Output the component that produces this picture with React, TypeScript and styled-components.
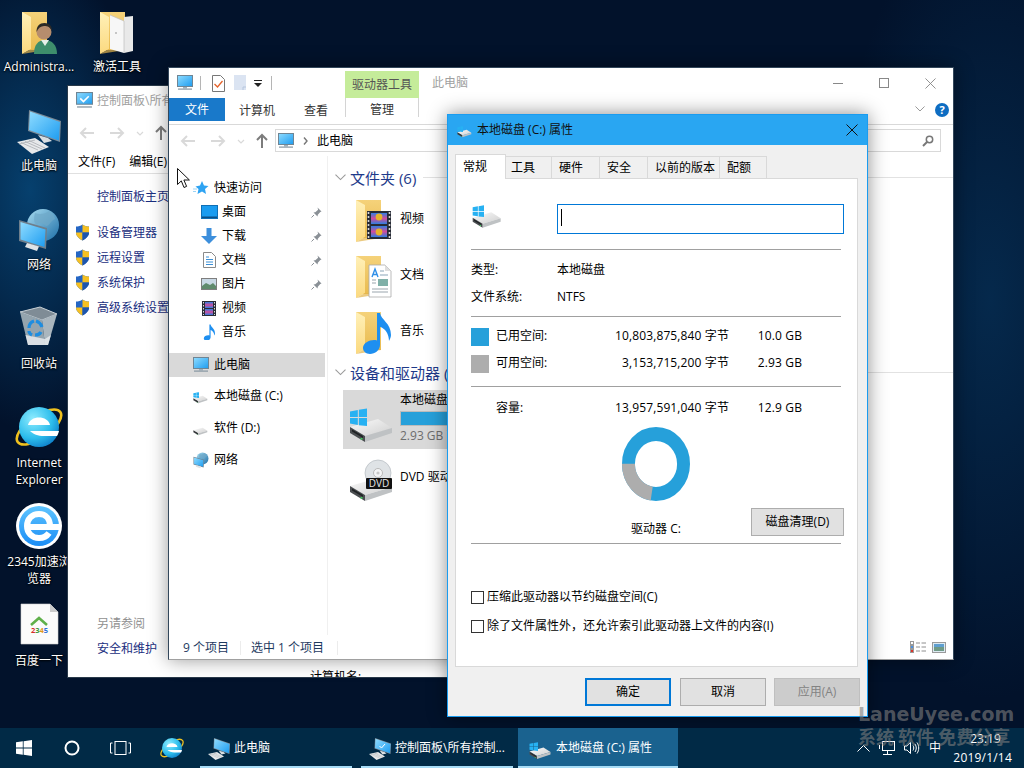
import React from "react";
import styled, { createGlobalStyle } from "styled-components";

const Global = createGlobalStyle`
  html, body { margin: 0; padding: 0; width: 1024px; height: 768px; overflow: hidden; }
  body { font-family: "Open Sans", "Noto Sans CJK SC", sans-serif; font-size: 12px; line-height: 16px; color: #000; }
`;

const Screen = styled.div`
  position: relative; width: 1024px; height: 768px; overflow: hidden;
  background:
    radial-gradient(ellipse 120px 240px at 30px 190px, #06406e 0%, rgba(6,64,110,0) 100%),
    radial-gradient(ellipse 160px 400px at 990px 300px, #05294c 0%, rgba(5,41,76,0) 100%),
    #02122b;
`;
const DefsSvg = styled.svg`position: absolute; width: 0; height: 0;`;

/* desktop */
const DesktopGrid = styled.div`
  display: grid; grid-auto-flow: column; grid-template-rows: repeat(7, 99px); grid-template-columns: repeat(2, 78px);
  padding-top: 4px; height: 723px; box-sizing: border-box;
`;
const DesktopIcon = styled.div`
  display: flex; flex-direction: column; align-items: center; padding-top: 3px; box-sizing: border-box; width: 78px;
  svg { display: block; margin-bottom: 3px; flex: none; }
`;
const DesktopLabel = styled.div`
  width: 75px; text-align: center; color: #fff; line-height: 17px; word-break: break-all;
  text-shadow: 0 1px 2px #000, 0 0 2px #000;
  &[data-latin] { word-break: normal; }
`;

/* windows */
const Win = styled.div<{ $x: number; $y: number; $w: number; $h: number }>`
  position: absolute; left: ${p => p.$x}px; top: ${p => p.$y}px; width: ${p => p.$w}px; height: ${p => p.$h}px;
  box-sizing: border-box; display: flex; flex-direction: column; overflow: hidden;
`;
const ControlWin = styled(Win)`background: #fff; border: 1px solid #2a3a4a;`;
const ExplorerWin = styled(Win)`background: #fff; border: 1px solid #33475b; box-shadow: 0 0 18px rgba(0,0,0,.4); border-bottom-color:#a0a0a0;`;
const DialogWin = styled(Win)`background: #f0f0f0; border: 1px solid #1a9cf0; box-shadow: 0 0 18px rgba(0,0,0,.45);`;

/* control panel */
const CpTitle = styled.div`height: 29px; display: flex; align-items: center; padding-left: 8px; gap: 4px; color: #a0a0a0; flex: none; white-space: nowrap;`;
const ArrowRow = styled.div<{ $pad: number; $h: number }>`height: ${p => p.$h}px; padding-left: ${p => p.$pad}px; display: flex; align-items: center; flex: none;`;
const CpMenu = styled.div`height: 23px; display: flex; gap: 14px; align-items: center; padding-left: 10px; border-bottom: 1px solid #e0e0e0; box-sizing: border-box; flex: none; white-space: nowrap;`;
const CpBody = styled.div`flex: 1; display: flex; min-height: 0;`;
const CpSide = styled.div`width: 241px; padding: 15px 0 20px 29px; box-sizing: border-box; display: flex; flex-direction: column; flex: none;`;
const CpHome = styled.div`color: #1a2e80; height: 16px; margin-bottom: 15px;`;
const CpLink = styled.div`height: 25px; display: flex; align-items: center; gap: 7px; margin-left: -22px; color: #1a2e80; white-space: nowrap; svg { flex: none; }`;
const CpSee = styled.div`margin-top: auto; color: #909090; margin-bottom: 9px;`;
const CpSafe = styled.div`color: #1a2e80;`;
const CpMain = styled.div`flex: 1; display: flex; align-items: flex-end;`;
const CpFooterText = styled.div`margin-bottom: -8px; margin-left: 1px; white-space: nowrap;`;

/* explorer */
const ExTitleRow = styled.div`height: 30px; display: flex; flex: none; align-items: flex-end; position: relative;`;
const QatRow = styled.div`display: flex; align-items: center; width: 176px; height: 30px; padding-left: 8px; box-sizing: border-box; flex: none;`;
const QatItem = styled.div<{ $ml: number }>`margin-left: ${p => p.$ml}px; display: flex; flex: none;`;
const QatSep = styled.div<{ $ml: number }>`width: 1px; height: 14px; background: #b5b5b5; margin-left: ${p => p.$ml}px;`;
const ContextTab = styled.div`width: 74px; height: 27px; background: #c5ec9a; color: #555; display: flex; align-items: center; justify-content: center; flex: none;`;
const ContextTitle = styled.div`color: #a0a0a0; margin-left: 13px; align-self: center; white-space: nowrap;`;
const WinControls = styled.div`margin-left: auto; display: flex; align-self: flex-start; height: 30px;`;
const WinButton = styled.div`width: 46px; height: 30px; display: flex; align-items: center; justify-content: center;`;
const TabRow = styled.div`height: 23px; display: flex; align-items: stretch; flex: none;`;
const FileTab = styled.div`width: 56px; background: #1979ca; color: #fff; display: flex; align-items: center; justify-content: center; box-sizing: border-box; padding-top: 1px;`;
const RibbonTab = styled.div<{ $w: number }>`width: ${p => p.$w}px; display: flex; align-items: center; justify-content: center; color: #333; flex: none; box-sizing: border-box; padding-top: 3px;`;
const ManageTab = styled.div`
  width: 74px; height: 19px; margin-left: 2px; flex: none; box-sizing: border-box; border-left: 1px solid #d4d4d4; border-right: 1px solid #d4d4d4;
  color: #333; text-align: center; padding-top: 4px;
`;
const RibbonRight = styled.div`margin-left: auto; display: flex; align-items: center; gap: 10px; padding-right: 4px;`;
const AddressRow = styled.div`height: 31px; margin-top: 3px; border-top: 1px solid #d9d9d9; display: flex; align-items: center; flex: none; padding-right: 12px;`;
const AddressBox = styled.div`flex: 1; height: 23px; border: 1px solid #d9d9d9; box-sizing: border-box; display: flex; align-items: center; padding-left: 2px; gap: 6px; margin-left: 5px; white-space: nowrap;`;
const AddressChevron = styled.span`margin: 0 3px; display: flex;`;
const SearchBox = styled.div`width: 180px; height: 23px; border: 1px solid #d9d9d9; border-left: 0; box-sizing: border-box; display: flex; align-items: center; justify-content: flex-end; padding-right: 6px;`;
const ExBody = styled.div`flex: 1; display: flex; min-height: 0;`;
const NavPane = styled.div`width: 159px; flex: none; box-sizing: border-box; padding: 20px 2px 0 0; border-right: 1px solid #f0f0f0;`;
const NavRow = styled.div<{ $indent: number; $selected?: boolean; $gapTop?: number }>`
  height: 24px; display: flex; align-items: center; position: relative; white-space: nowrap;
  padding-left: ${p => p.$indent}px; margin-top: ${p => p.$gapTop ?? 0}px; gap: 5px; color: #000;
  background: ${p => (p.$selected ? "#d9d9d9" : "transparent")};
`;
const NavIconBox = styled.div`width: 16px; height: 16px; display: flex; align-items: center; justify-content: center; flex: none; svg { flex: none; }`;
const PinBox = styled.div`margin-left: auto; margin-right: 3px; display: flex;`;
const ContentPane = styled.div`flex: 1; min-width: 0; padding-left: 12px; overflow: hidden;`;
const GroupHead = styled.div<{ $h: number; $top: number; $bottom: number }>`
  height: ${p => p.$h}px; padding: ${p => p.$top}px 0 ${p => p.$bottom}px; margin-left: -5px; box-sizing: border-box; display: flex; align-items: center; gap: 4px;
  color: #1e3a8a; font-size: 15px; line-height: 20px; white-space: nowrap; width: 620px;
`;
const HeadLine = styled.div`flex: 1; height: 1px; background: #e2e2e2; margin-left: 3px;`;
const ItemRow = styled.div<{ $h: number; $selected?: boolean }>`
  height: ${p => p.$h}px; display: flex; align-items: center; width: 170px; margin-left: 3px; padding-left: 6px; box-sizing: border-box; gap: 3px;
  background: ${p => (p.$selected ? "#d9d9d9" : "transparent")};
  svg { flex: none; }
`;
const ItemName = styled.div`white-space: nowrap;`;
const DriveInfo = styled.div`width: 110px; margin-top: -4px;`;
const Usage = styled.div`height: 15px; box-sizing: border-box; border: 1px solid #bcbcbc; background: #26a0da; margin: 3px 0 2px; width: 110px;`;
const FreeText = styled.div`color: #6d6d6d; white-space: nowrap;`;
const StatusBar = styled.div`height: 24px; display: flex; align-items: center; padding: 1px 0 0 14px; box-sizing: border-box; flex: none; color: #1e3a5f; white-space: nowrap;`;
const StatusCell = styled.div<{ $w: number }>`width: ${p => p.$w}px; height: 14px; line-height: 14px; flex: none; border-right: 1px solid #ececec; margin-right: 10px;`;
const StatusIcons = styled.div`margin-left: auto; padding-right: 7px; display: flex; gap: 6px; align-items: center; margin-top: -1px;`;

/* dialog */
const DlgTitle = styled.div`height: 30px; background: #29a6f2; display: flex; align-items: center; padding-left: 9px; gap: 4px; flex: none; white-space: nowrap; color: #111;`;
const DlgClose = styled.div`margin-left: auto; width: 30px; display: flex; justify-content: center;`;
const DlgTabs = styled.div`height: 25px; margin: 8px 0 0 7px; display: flex; align-items: flex-end; flex: none; position: relative; z-index: 1;`;
const DlgTab = styled.div<{ $w: number; $pad: number; $active?: boolean }>`
  width: ${p => p.$w}px; height: ${p => (p.$active ? 25 : 22)}px; box-sizing: border-box; display: flex; align-items: center;
  padding-left: ${p => p.$pad}px; padding-bottom: ${p => (p.$active ? 1 : 0)}px;
  border: 1px solid #d9d9d9; border-left-width: ${p => (p.$active ? 1 : 0)}px; border-bottom: 0; flex: none; white-space: nowrap;
  background: ${p => (p.$active ? "#fff" : "#f0f0f0")}; margin-bottom: ${p => (p.$active ? -1 : 0)}px;
`;
const DlgPanel = styled.div`
  height: 489px; margin: 0 9px 0 7px; background: #fff; border: 1px solid #d9d9d9; box-sizing: border-box; padding: 1px 13px 0 15px; flex: none;
  display: flex; flex-direction: column;
`;
const NameRow = styled.div`height: 69px; padding-top: 24px; box-sizing: border-box; display: grid; grid-template-columns: 86px 1fr; flex: none; svg { margin-top: -7px; margin-left: 1px; }`;
const NameField = styled.div`height: 30px; border: 1px solid #0078d7; box-sizing: border-box; padding: 4px 0 0 3px;`;
const Caret = styled.div`width: 1px; height: 17px; background: #000;`;
const Sep = styled.div<{ $top: number }>`height: 1px; background: #a0a0a0; margin-right: 3px; margin-top: ${p => p.$top}px; flex: none;`;
const FactRow = styled.div<{ $top?: number }>`height: 27px; box-sizing: border-box; padding-bottom: 2px; display: grid; grid-template-columns: 86px 1fr; align-items: center; margin-top: ${p => p.$top ?? 0}px; flex: none;`;
const SpaceRow = styled.div<{ $top?: number }>`height: 27px; box-sizing: border-box; padding-bottom: 2px; display: grid; grid-template-columns: 25px 112px 121px 73px; align-items: center; margin-top: ${p => p.$top ?? 0}px; flex: none; white-space: nowrap;`;
const Swatch = styled.div<{ $c: string }>`width: 18px; height: 18px; margin-bottom: -2px; background: ${p => p.$c};`;
const Num = styled.div`text-align: right; letter-spacing: .12px;`;
const ChartArea = styled.div`height: 121px; display: grid; grid-template-columns: 151px 68px 154px; grid-template-rows: 86px 1fr; flex: none;`;
const DonutCell = styled.div`grid-column: 2; grid-row: 1; padding-top: 5px;`;
const Caption = styled.div`grid-column: 2; grid-row: 2; text-align: center; padding-top: 13px; white-space: nowrap;`;
const CleanButton = styled.div`grid-column: 3; grid-row: 2; justify-self: end; width: 93px; height: 28px; box-sizing: border-box; background: #e1e1e1; border: 1px solid #adadad; display: flex; align-items: center; justify-content: center;`;
const CheckRow = styled.div<{ $top: number }>`display: flex; align-items: center; gap: 3px; height: 16px; margin-top: ${p => p.$top}px; white-space: nowrap; flex: none;`;
const CheckBox = styled.div`width: 13px; height: 13px; box-sizing: border-box; border: 1px solid #333; background: #fff; flex: none;`;
const DlgFooter = styled.div`flex: 1; display: flex; justify-content: flex-end; align-items: flex-start; gap: 8px; padding: 11px 7px 0 0;`;
const DlgButton = styled.div<{ $kind?: "default" | "disabled" }>`
  width: 86px; height: 28px; box-sizing: border-box; display: flex; align-items: center; justify-content: center;
  background: ${p => (p.$kind === "disabled" ? "#cccccc" : "#e1e1e1")};
  color: ${p => (p.$kind === "disabled" ? "#838383" : "#000")};
  border: ${p => (p.$kind === "default" ? "2px solid #0078d7" : p.$kind === "disabled" ? "1px solid #bfbfbf" : "1px solid #adadad")};
  margin-right: ${p => (p.$kind === "default" ? 1 : 0)}px;
`;

/* taskbar */
const Taskbar = styled.div`
  position: absolute; left: 0; right: 0; bottom: 0; height: 40px; background: #012a46; display: flex; align-items: stretch; color: #fff; white-space: nowrap;
`;
const TaskSlot = styled.div<{ $w: number }>`width: ${p => p.$w}px; flex: none; display: flex; align-items: center; justify-content: center;`;
const TaskItem = styled.div<{ $w: number; $active?: boolean; $gap: number; $pad: number }>`
  width: ${p => p.$w}px; margin-right: ${p => p.$gap}px; flex: none; box-sizing: border-box; display: flex; align-items: center; gap: 3px; padding: 2px 0 0 ${p => p.$pad}px;
  background: ${p => (p.$active ? "#1a628f" : "transparent")}; border-bottom: 2px solid #a7dcf6;
  svg { flex: none; }
`;
const Tray = styled.div`margin-left: auto; display: flex; align-items: center; padding-right: 12px;`;
const TrayIcon = styled.div<{ $w: number }>`width: ${p => p.$w}px; display: flex; justify-content: center; flex: none;`;
const Clock = styled.div`width: 66px; text-align: right; line-height: 20px;`;
const ClockTime = styled.div`text-align: center; padding-left: 13px;`;
const ClockDate = styled.div`margin-top: -1px; letter-spacing: .2px;`;

const Watermark = styled.div`
  position: absolute; left: 858px; top: 702px; width: 160px; color: rgba(125,125,125,.62); font-weight: 700; white-space: nowrap;
  pointer-events: none;
`;
const WmTop = styled.div`font-family: "DejaVu Sans", sans-serif; font-size: 19px; line-height: 24px;`;
const WmBottom = styled.div`font-family: "Noto Sans CJK SC", sans-serif; font-size: 18px; line-height: 22px; margin-top: -1px;`;
const CursorLayer = styled.div`position: absolute; left: 177px; top: 168px; width: 13px; height: 21px;`;

/* icons */
const Defs = () => (
  <DefsSvg>
    <defs>
      <linearGradient id="scr" x1="0" y1="0" x2="1" y2="1"><stop offset="0" stopColor="#8fdcff" /><stop offset="1" stopColor="#1d9cf0" /></linearGradient>
      <linearGradient id="fold" x1="0" y1="0" x2="0" y2="1"><stop offset="0" stopColor="#f5d27a" /><stop offset="1" stopColor="#e9bb4f" /></linearGradient>
      <linearGradient id="door" x1="0" y1="0" x2="0" y2="1"><stop offset="0" stopColor="#fff0b8" /><stop offset="1" stopColor="#fbd97f" /></linearGradient>
      <radialGradient id="ieg" cx=".35" cy=".3" r=".8"><stop offset="0" stopColor="#8eecff" /><stop offset=".6" stopColor="#2dbdec" /><stop offset="1" stopColor="#0a78c6" /></radialGradient>
      <linearGradient id="e2" x1="0" y1="0" x2="0" y2="1"><stop offset="0" stopColor="#5ec4ff" /><stop offset="1" stopColor="#1b8df5" /></linearGradient>
      <linearGradient id="glb" x1="0" y1="0" x2="1" y2="1"><stop offset="0" stopColor="#a8dcf0" /><stop offset="1" stopColor="#1e6fa8" /></linearGradient>
      <linearGradient id="top" x1="0" y1="0" x2="1" y2="1"><stop offset="0" stopColor="#fbfbfb" /><stop offset="1" stopColor="#cfcfcf" /></linearGradient>
      <linearGradient id="film" x1="0" y1="0" x2="0" y2="1"><stop offset="0" stopColor="#2f7fe0" /><stop offset=".5" stopColor="#d14d9b" /><stop offset="1" stopColor="#2f7fe0" /></linearGradient>
    </defs>
  </DefsSvg>
);

type Sz = { size: number };

const FlatMonitor = ({ size }: Sz) => (
  <svg width={size} height={size} viewBox="0 0 16 16">
    <rect x=".5" y=".5" width="15" height="11" fill="url(#scr)" stroke="#6f8594" />
    <rect x="6" y="12" width="4" height="1.5" fill="#9fb0bb" />
    <rect x="1" y="13.5" width="14" height="1.2" fill="#8696a2" />
  </svg>
);

const CheckMonitor = () => (
  <svg width="17" height="17" viewBox="0 0 16 16">
    <rect x=".5" y=".5" width="15" height="11" fill="url(#scr)" stroke="#6f8594" />
    <path d="M4 6l3 3 5-5" stroke="#fff" strokeWidth="1.5" fill="none" />
    <rect x="1" y="13.5" width="14" height="1.2" fill="#8696a2" />
  </svg>
);

const PerspectiveMonitor = ({ size, check }: Sz & { check?: boolean }) => (
  <svg width={size} height={size} viewBox="0 0 48 48">
    <polygon points="14,4 46,15 45,36 13,25" fill="#7c8a96" />
    <polygon points="15,5.5 45,16 44,34.5 14,24" fill="url(#scr)" />
    <polygon points="23,29 33,32 37,35 29,37" fill="#d9dee2" />
    <polygon points="2,36 20,32 34,41 17,48" fill="#e7e9eb" />
    <path d="M6 36.5L23 44M10 35.5L27 43M14 34.5L30 42M4 38L20 34" stroke="#a9adb2" strokeWidth=".8" fill="none" />
    {check && <path d="M23 20l4 4 7-8" stroke="#fff" strokeWidth="2" fill="none" />}
  </svg>
);

const Folder = ({ children, size = 48 }: { children?: React.ReactNode; size?: number }) => (
  <svg width={size} height={size} viewBox="0 0 48 48">
    <rect x="7" y="5" width="25" height="38" fill="url(#fold)" />
    <polygon points="7,5 16,10 16,42 7,47" fill="url(#door)" />
    <polygon points="16,42 32,42 32,43 7,47" fill="#e3b44a" opacity=".7" />
    {children}
  </svg>
);

const AdminFolder = () => (
  <Folder>
    <path d="M19 47c0-9 4-14 11-14s12 5 12 14z" fill="#3e8e6c" />
    <path d="M26 33l4 6 4-6z" fill="#e8efe9" />
    <circle cx="29" cy="25" r="7.5" fill="#b68d6d" />
    <path d="M21.5 25c0-6 3-9 8-9s7.5 3 7.5 8c-2-4-4-5-8-5-3 0-6 2-7.5 6z" fill="#2c2a26" />
  </Folder>
);

const DoorsFolder = () => (
  <Folder>
    <polygon points="17,8 31,14 31,46 17,42" fill="#f7f7f7" />
    <polygon points="31,10 40,9 40,44 31,46" fill="#e9e9e9" />
    <path d="M17 8l14 6v32" stroke="#bdbdbd" fill="none" strokeWidth=".7" />
    <circle cx="23" cy="26" r=".8" fill="#888" />
  </Folder>
);

const VideoFolder = () => (
  <Folder>
    <rect x="18" y="16" width="24" height="28" fill="#272b36" />
    <rect x="22" y="18" width="16" height="11" fill="url(#film)" />
    <rect x="22" y="31" width="16" height="11" fill="url(#film)" />
    <circle cx="30" cy="22" r="3.4" fill="#e6b22a" /><circle cx="30" cy="37" r="3.4" fill="#e6b22a" />
    <path d="M19.5 17v26M40.5 17v26" stroke="#d5d5d5" strokeWidth="1.6" strokeDasharray="2 2" />
  </Folder>
);

const DocFolder = () => (
  <Folder>
    <polygon points="20,14 36,14 42,20 42,46 20,46" fill="#fff" stroke="#a9a9a9" strokeWidth=".8" />
    <polygon points="36,14 42,20 36,20" fill="#dedede" />
    <path d="M23 26l3-8 3 8M24 23.5h4" stroke="#2f8fe8" strokeWidth="1.4" fill="none" />
    <path d="M31 20h4M31 24h8" stroke="#8aa5b8" strokeWidth="1" />
    <rect x="29" y="28" width="10" height="7" fill="#7fb0a8" />
    <path d="M23 29h4M23 32h4M23 38h16M23 41h16" stroke="#9aa5ad" strokeWidth="1" />
  </Folder>
);

const NotePath = ({ c = "#1e8ff0" }: { c?: string }) => (
  <path d="M28 6h3c1 7 11 10 11 22 0 2-1 4-2 6 0-7-4-13-9-14v18c0 5-5 9-10 9-4 0-7-3-7-6 0-5 6-8 11-8 1 0 2 0 3 .5z" fill={c} />
);
const MusicFolder = () => <Folder><NotePath /></Folder>;

const WinLogo = ({ x, y, s }: { x: number; y: number; s: number }) => (
  <g fill="#27b1f2">
    <polygon points={`${x},${y + s * .14} ${x + s * .46},${y + s * .06} ${x + s * .46},${y + s * .47} ${x},${y + s * .47}`} />
    <polygon points={`${x + s * .52},${y + s * .05} ${x + s},${y - s * .03} ${x + s},${y + s * .47} ${x + s * .52},${y + s * .47}`} />
    <polygon points={`${x},${y + s * .53} ${x + s * .46},${y + s * .53} ${x + s * .46},${y + s * .94} ${x},${y + s * .86}`} />
    <polygon points={`${x + s * .52},${y + s * .53} ${x + s},${y + s * .53} ${x + s},${y + s} ${x + s * .52},${y + s * .95}`} />
  </g>
);

const DriveBody = () => (
  <g>
    <polygon points="1,31 29,23 43,32 16,40" fill="url(#top)" />
    <polygon points="1,31 16,40 16,46 1,37" fill="#4a4d50" />
    <polygon points="16,40 43,32 43,37 16,46" fill="#bfc2c4" />
    <polygon points="3,33.5 14,40 14,42 3,35.5" fill="#1f2224" />
    <rect x="11.5" y="42" width="2" height="1.6" fill="#3fce5c" />
  </g>
);

const Drive = ({ size, logo = true }: Sz & { logo?: boolean }) => (
  <svg width={size} height={size} viewBox="0 0 48 48">
    <DriveBody />
    {logo && <WinLogo x={1} y={13} s={17} />}
  </svg>
);

const DvdDrive = ({ size }: Sz) => (
  <svg width={size} height={size} viewBox="0 0 48 48">
    <g transform="translate(0 2)"><DriveBody /></g>
    <circle cx="29" cy="20" r="13" fill="#dfe3e6" stroke="#b4bac0" strokeWidth=".7" />
    <circle cx="29" cy="20" r="4.5" fill="#f4f5f6" stroke="#b9b9b9" />
    <circle cx="29" cy="20" r="1.6" fill="#c8c8c8" />
    <rect x="17" y="25" width="26" height="11" rx="1" fill="#111" />
    <text x="30" y="34.2" fontSize="10" textAnchor="middle" fill="#e7e7e7" fontFamily="Open Sans, sans-serif">DVD</text>
  </svg>
);

const Shield = () => (
  <svg width="15" height="17" viewBox="0 0 15 17">
    <path d="M7.5 .5c2 1.400 4 2 6.500 2v6c0 3.500-3 6-6.500 8-3.500-2-6.500-4.500-6.500-8v-6c2.500 0 4.500-.6 6.500-2z" fill="#2566c4" />
    <path d="M7.5 .5c2 1.400 4 2 6.500 2v6H7.500z" fill="#f6c021" />
    <path d="M1 8.500h6.500v8C4 14.500 1 12 1 8.500z" fill="#f6c021" />
    <path d="M7.500 8.500H14c0 3.500-3 6-6.500 8z" fill="#1d55ad" />
  </svg>
);

const Globe = ({ size }: Sz) => (
  <svg width={size} height={size} viewBox="0 0 48 48">
    <circle cx="28" cy="20" r="16" fill="url(#glb)" />
    <path d="M20 8c5 2 10 1 14-2 3 2 5 4 6 8-5 2-5 7-9 7-3-3-7-4-9-1-4-2-3-8-2-12z" fill="#6fa8c8" opacity=".7" />
    <polygon points="4,15 32,23 31,44 4,36" fill="#6f7f8c" />
    <polygon points="5.5,17 30.500,24.500 29.500,42 5.500,34.500" fill="url(#scr)" />
    <polygon points="12,38 24,41.500 22,46 10,42" fill="#dfe3e6" />
  </svg>
);

const RecycleBin = () => (
  <svg width="48" height="48" viewBox="0 0 48 48">
    <polygon points="5,8 25,3 42,10 27,16" fill="#7f8c96" stroke="#c9d1d6" strokeWidth="1" />
    <polygon points="5,8 27,16 30,41 13,41" fill="#94a4ae" />
    <polygon points="27,16 42,10 33,41 30,41" fill="#aab6be" />
    <polygon points="10.500,31 30,35 36,31 33,41 13,41" fill="#e6eaed" opacity=".85" />
    <g fill="none" stroke="#1e8de0" strokeWidth="3.2">
      <path d="M14 24c0-4 2-6 5-7" /><path d="M21 17c3 1 5 3 6 6" /><path d="M26 28c-1 2-3 3-6 3" /><path d="M17 31c-2-1-3-3-3-4" />
    </g>
  </svg>
);

const IeLogo = ({ size }: Sz) => (
  <svg width={size} height={size} viewBox="0 0 48 48">
    <ellipse cx="24" cy="24" rx="26" ry="11" transform="rotate(-35 24 24)" fill="none" stroke="#f0c11e" strokeWidth="2.6" />
    <circle cx="24" cy="24" r="20" fill="url(#ieg)" />
    <path d="M13 22c2-10 20-10 22 0z" fill="#fff" />
    <path d="M15 28H44C43.500 30 43 31 42 33H29C23 33 18 31 15 28z" fill="#fff" />
  </svg>
);

const E2345 = () => (
  <svg width="48" height="48" viewBox="0 0 48 48">
    <circle cx="24" cy="24" r="23" fill="#fff" />
    <circle cx="24" cy="24" r="20" fill="url(#e2)" />
    <path d="M34 31c-2 3-6 5-10 5-7 0-12-5-12-12s5-12 12-12 11 5 11 12" fill="none" stroke="#fff" strokeWidth="6" />
    <rect x="13" y="22" width="31" height="6" fill="#fff" />
  </svg>
);

const PageIcon = () => (
  <svg width="48" height="48" viewBox="0 0 48 48">
    <polygon points="6,3 35,3 43,11 43,43 6,43" fill="#fbfbfb" stroke="#d0d0d0" strokeWidth=".6" />
    <polygon points="35,3 43,11 35,11" fill="#cbcbcb" />
    <path d="M16 24l8-7 8 7" fill="none" stroke="#5fb04a" strokeWidth="2.6" />
    <text x="24.5" y="32" textAnchor="middle" fontSize="7.5" fontWeight="700" fontFamily="Open Sans, sans-serif">
      <tspan fill="#d62b2b">2</tspan><tspan fill="#3a9a3a">3</tspan><tspan fill="#e09a1a">4</tspan><tspan fill="#2b6fd6">5</tspan>
    </text>
  </svg>
);

const ArrowGlyphs = () => (
  <svg width="90" height="16" viewBox="0 0 90 16">
    <g fill="none" strokeWidth="2">
      <path d="M15 8H2M7 3L2 8l5 5" stroke="#d9d9d9" />
      <path d="M31 8h13M39 3l5 5-5 5" stroke="#d9d9d9" />
      <path d="M58 7l3 3 3-3" stroke="#d9d9d9" strokeWidth="1.2" />
      <path d="M82 15V2M77 7l5-5 5 5" stroke="#7c7c7c" />
    </g>
  </svg>
);

const Star = () => (
  <svg width="16" height="16" viewBox="0 0 16 16">
    <polygon points="9,1 11,5.5 15.5,6 12,9 13,14 9,11.500 4.500,14 5.500,9 2.500,6.500 7,5.500" fill="#2ea3f2" />
    <path d="M0 9h4M0 11.500h3" stroke="#9bd3f5" />
  </svg>
);
const DesktopSmall = () => (
  <svg width="17" height="14" viewBox="0 0 17 14">
    <rect x=".5" y=".5" width="16" height="13" fill="#1a9cf0" stroke="#0f6fb5" />
    <rect x="1" y="11.5" width="15" height="1.5" fill="#0b4f86" />
  </svg>
);
const DownSmall = () => (
  <svg width="16" height="16" viewBox="0 0 16 16"><path d="M5.500 0h5v8H16l-8 8-8-8h5.500z" fill="#3d8fdc" /></svg>
);
const DocSmall = () => (
  <svg width="13" height="16" viewBox="0 0 13 16">
    <path d="M.5 .5h8l4 4v11H.5z" fill="#fff" stroke="#8a8a8a" />
    <path d="M3 5h3M3 7.500h7M3 10h7M3 12.500h7" stroke="#3b8fd6" />
  </svg>
);
const PicSmall = () => (
  <svg width="16" height="12" viewBox="0 0 16 12">
    <rect x=".5" y=".5" width="15" height="11" fill="#c8d8e4" stroke="#7e7e7e" />
    <path d="M1 8l4-3 4 2 3-2 3 3v3H1z" fill="#5f8a6c" />
  </svg>
);
const FilmSmall = () => (
  <svg width="14" height="15" viewBox="0 0 14 15">
    <rect width="14" height="15" fill="#2a2d38" />
    <rect x="3" y="1" width="8" height="6" fill="url(#film)" /><rect x="3" y="8" width="8" height="6" fill="url(#film)" />
    <path d="M1.500 1v13M12.500 1v13" stroke="#ddd" strokeDasharray="1.5 1.5" />
  </svg>
);
const NoteSmall = () => (
  <svg width="14" height="16" viewBox="10 5 34 40"><NotePath /></svg>
);
const Pin = () => (
  <svg width="11" height="11" viewBox="0 0 11 11">
    <path d="M6.500 .5l4 4-1.200 .4-2.500 2.800-.3 1.800-4-4 1.800-.3 2.800-2.500z" fill="#8a9096" />
    <path d="M3 8L.5 10.500" stroke="#8a9096" />
  </svg>
);
const DocCheck = () => (
  <svg width="13" height="17" viewBox="0 0 13 17">
    <path d="M.5 .5h8l4 4v12H.5z" fill="#fff" stroke="#777" />
    <path d="M2.500 9l3 3 5-6" stroke="#e5622a" strokeWidth="1.3" fill="none" />
  </svg>
);
const PageBlue = () => (
  <svg width="13" height="16" viewBox="0 0 13 16">
    <path d="M0 0h12v15H0z" fill="#dbe4f2" /><path d="M9 15v-3h3" stroke="#b6c6de" fill="none" />
  </svg>
);
const DropMark = () => (
  <svg width="8" height="7" viewBox="0 0 8 7"><path d="M0 0h8v1H0zM0 3h8L4 7z" fill="#222" /></svg>
);
const Cross = ({ size, color }: Sz & { color: string }) => (
  <svg width={size} height={size} viewBox="0 0 12 12"><path d="M.5 .5l11 11M11.500 .5l-11 11" stroke={color} /></svg>
);
const Chevron = ({ color = "#9a9a9a", size = 11 }: { color?: string; size?: number }) => (
  <svg width={size} height={size * .64} viewBox="0 0 11 7"><path d="M.5 .5l5 5 5-5" fill="none" stroke={color} strokeWidth="1.1" /></svg>
);
const ChevronRight = () => (
  <svg width="5" height="8" viewBox="0 0 5 8"><path d="M1 .5L4 4 1 7.500" fill="none" stroke="#777" strokeWidth="1.4" /></svg>
);
const Help = () => (
  <svg width="14" height="14" viewBox="0 0 14 14">
    <circle cx="7" cy="7" r="7" fill="#0e6dc2" />
    <text x="7" y="11" fontSize="11" fontWeight="700" textAnchor="middle" fill="#fff" fontFamily="Open Sans, sans-serif">?</text>
  </svg>
);
const SearchGlyph = () => (
  <svg width="12" height="12" viewBox="0 0 12 12">
    <circle cx="7.500" cy="4.500" r="3.200" fill="none" stroke="#777" strokeWidth="1.5" /><path d="M5 7l-4 4" stroke="#777" strokeWidth="2" />
  </svg>
);
const DetailsGlyph = () => (
  <svg width="16" height="12" viewBox="0 0 16 12">
    <rect x=".5" y=".5" width="3" height="3" fill="#fff" stroke="#9a9a9a" />
    <rect x=".5" y="4.5" width="3" height="3" fill="#4a90e0" stroke="#9a9a9a" />
    <rect x=".5" y="8.5" width="3" height="3" fill="#d9342b" stroke="#9a9a9a" />
    <path d="M6 2h4M11.500 2H16M6 6h4M11.500 6H16M6 10h4M11.500 10H16" stroke="#8e8e8e" />
  </svg>
);
const LargeGlyph = () => (
  <svg width="14" height="11" viewBox="0 0 14 11">
    <rect x=".5" y=".5" width="13" height="10" fill="#dceaf2" stroke="#9a9a9a" />
    <rect x="2" y="2" width="10" height="3" fill="#5f9fd0" />
    <rect x="2" y="5" width="10" height="4" fill="#6f9a86" />
  </svg>
);
const Donut = () => (
  <svg width="68" height="74" viewBox="0 0 100 100" preserveAspectRatio="none">
    <circle cx="50" cy="50" r="40.5" fill="none" stroke="#26a0da" strokeWidth="19" />
    <circle cx="50" cy="50" r="40.5" fill="none" stroke="#adadad" strokeWidth="19" pathLength={100} strokeDasharray="22.6 77.4" transform="rotate(99 50 50)" />
  </svg>
);
const StartLogo = () => (
  <svg width="16" height="16" viewBox="0 0 16 16" fill="#fff">
    <polygon points="0,2.300 6.800,1.300 6.800,7.600 0,7.600" /><polygon points="7.600,1.200 16,0 16,7.600 7.600,7.600" />
    <polygon points="0,8.400 6.800,8.400 6.800,14.700 0,13.700" /><polygon points="7.600,8.400 16,8.400 16,16 7.600,14.800" />
  </svg>
);
const Cortana = () => (
  <svg width="16" height="16" viewBox="0 0 16 16"><circle cx="8" cy="8" r="6.5" fill="none" stroke="#fff" strokeWidth="2" /></svg>
);
const TaskView = () => (
  <svg width="21" height="14" viewBox="0 0 21 14" fill="none" stroke="#fff">
    <rect x="5" y=".5" width="11" height="13" /><path d="M2.500 2H.5v10h2M18.500 2h2v10h-2" />
  </svg>
);
const Caretup = () => (
  <svg width="13" height="8" viewBox="0 0 13 8"><path d="M.5 7.500l6-6 6 6" fill="none" stroke="#fff" /></svg>
);
const NetTray = () => (
  <svg width="16" height="15" viewBox="0 0 16 15" fill="none" stroke="#fff">
    <rect x="3.500" y=".5" width="12" height="9" /><path d="M8.500 10v3M4 13.500h9M.5 4v4" />
  </svg>
);
const SoundTray = () => (
  <svg width="16" height="14" viewBox="0 0 16 14" fill="none" stroke="#fff">
    <path d="M.5 5h2.500l3.500-3.500v11L3 9H.5z" /><path d="M9 4.500c1 1.500 1 3.500 0 5M11 3c1.700 2.500 1.700 5.500 0 8M13 1.500c2.300 3.300 2.300 7.700 0 11" />
  </svg>
);
const Cursor = () => (
  <svg width="13" height="21" viewBox="0 0 13 21">
    <path d="M.5 .5v16l3.800-3.600 2.700 6.600 2.600-1.100-2.700-6.400h5.500z" fill="#fff" stroke="#111" />
  </svg>
);

const Panel = () => (
  <DlgPanel>
    <NameRow>
      <Drive size={32} />
      <NameField><Caret /></NameField>
    </NameRow>
    <Sep $top={0} />
    <FactRow $top={7}><div>类型:</div><div>本地磁盘</div></FactRow>
    <FactRow><div>文件系统:</div><div>NTFS</div></FactRow>
    <Sep $top={5} />
    <SpaceRow $top={6}><Swatch $c="#26a0da" /><div>已用空间:</div><Num>10,803,875,840 字节</Num><Num>10.0 GB</Num></SpaceRow>
    <SpaceRow><Swatch $c="#adadad" /><div>可用空间:</div><Num>3,153,715,200 字节</Num><Num>2.93 GB</Num></SpaceRow>
    <Sep $top={9} />
    <SpaceRow $top={8}><div /><div>容量:</div><Num>13,957,591,040 字节</Num><Num>12.9 GB</Num></SpaceRow>
    <ChartArea>
      <DonutCell><Donut /></DonutCell>
      <Caption>驱动器 C:</Caption>
      <CleanButton>磁盘清理(D)</CleanButton>
    </ChartArea>
    <Sep $top={0} />
    <CheckRow $top={45}><CheckBox />压缩此驱动器以节约磁盘空间(C)</CheckRow>
    <CheckRow $top={13}><CheckBox />除了文件属性外，还允许索引此驱动器上文件的内容(I)</CheckRow>
  </DlgPanel>
);

export default function App() {
  return (
    <Screen>
      <Global />
      <Defs />
      <DesktopGrid>
        <DesktopIcon><AdminFolder /><DesktopLabel>Administra...</DesktopLabel></DesktopIcon>
        <DesktopIcon><PerspectiveMonitor size={48} /><DesktopLabel>此电脑</DesktopLabel></DesktopIcon>
        <DesktopIcon><Globe size={48} /><DesktopLabel>网络</DesktopLabel></DesktopIcon>
        <DesktopIcon><RecycleBin /><DesktopLabel>回收站</DesktopLabel></DesktopIcon>
        <DesktopIcon><IeLogo size={48} /><DesktopLabel data-latin="1">Internet Explorer</DesktopLabel></DesktopIcon>
        <DesktopIcon><E2345 /><DesktopLabel>2345加速浏览器</DesktopLabel></DesktopIcon>
        <DesktopIcon><PageIcon /><DesktopLabel>百度一下</DesktopLabel></DesktopIcon>
        <DesktopIcon><DoorsFolder /><DesktopLabel>激活工具</DesktopLabel></DesktopIcon>
      </DesktopGrid>

      <ControlWin $x={67} $y={85} $w={500} $h={593}>
        <CpTitle><CheckMonitor />控制面板\所有控制面板项\系统</CpTitle>
        <ArrowRow $pad={11} $h={36}><ArrowGlyphs /></ArrowRow>
        <CpMenu><span>文件(F)</span><span>编辑(E)</span></CpMenu>
        <CpBody>
          <CpSide>
            <CpHome>控制面板主页</CpHome>
            <CpLink><Shield />设备管理器</CpLink>
            <CpLink><Shield />远程设置</CpLink>
            <CpLink><Shield />系统保护</CpLink>
            <CpLink><Shield />高级系统设置</CpLink>
            <CpSee>另请参阅</CpSee>
            <CpSafe>安全和维护</CpSafe>
          </CpSide>
          <CpMain><CpFooterText>计算机名:</CpFooterText></CpMain>
        </CpBody>
      </ControlWin>

      <ExplorerWin $x={168} $y={67} $w={786} $h={593}>
        <ExTitleRow>
          <QatRow>
            <FlatMonitor size={16} />
            <QatSep $ml={7} />
            <QatItem $ml={11}><DocCheck /></QatItem>
            <QatItem $ml={9}><PageBlue /></QatItem>
            <QatItem $ml={7}><DropMark /></QatItem>
            <QatSep $ml={9} />
          </QatRow>
          <ContextTab>驱动器工具</ContextTab>
          <ContextTitle>此电脑</ContextTitle>
          <WinControls>
            <WinButton><svg width="10" height="1"><rect width="10" height="1" fill="#888" /></svg></WinButton>
            <WinButton><svg width="10" height="10"><rect x=".5" y=".5" width="9" height="9" fill="none" stroke="#888" /></svg></WinButton>
            <WinButton><Cross size={11} color="#888" /></WinButton>
          </WinControls>
        </ExTitleRow>
        <TabRow>
          <FileTab>文件</FileTab>
          <RibbonTab $w={64}>计算机</RibbonTab>
          <RibbonTab $w={54}>查看</RibbonTab>
          <ManageTab>管理</ManageTab>
          <RibbonRight><Chevron size={10} /><Help /></RibbonRight>
        </TabRow>
        <AddressRow>
          <ArrowRow $pad={11} $h={31}><ArrowGlyphs /></ArrowRow>
          <AddressBox><FlatMonitor size={16} /><AddressChevron><ChevronRight /></AddressChevron>此电脑</AddressBox>
          <SearchBox><SearchGlyph /></SearchBox>
        </AddressRow>
        <ExBody>
          <NavPane>
            <NavRow $indent={24}><NavIconBox><Star /></NavIconBox>快速访问</NavRow>
            <NavRow $indent={32}><NavIconBox><DesktopSmall /></NavIconBox>桌面<PinBox><Pin /></PinBox></NavRow>
            <NavRow $indent={32}><NavIconBox><DownSmall /></NavIconBox>下载<PinBox><Pin /></PinBox></NavRow>
            <NavRow $indent={32}><NavIconBox><DocSmall /></NavIconBox>文档<PinBox><Pin /></PinBox></NavRow>
            <NavRow $indent={32}><NavIconBox><PicSmall /></NavIconBox>图片<PinBox><Pin /></PinBox></NavRow>
            <NavRow $indent={32}><NavIconBox><FilmSmall /></NavIconBox>视频</NavRow>
            <NavRow $indent={32}><NavIconBox><NoteSmall /></NavIconBox>音乐</NavRow>
            <NavRow $indent={24} $selected $gapTop={9}><NavIconBox><FlatMonitor size={16} /></NavIconBox>此电脑</NavRow>
            <NavRow $indent={24} $gapTop={7}><NavIconBox><Drive size={16} /></NavIconBox>本地磁盘 (C:)</NavRow>
            <NavRow $indent={24} $gapTop={8}><NavIconBox><Drive size={16} logo={false} /></NavIconBox>软件 (D:)</NavRow>
            <NavRow $indent={24} $gapTop={8}><NavIconBox><Globe size={18} /></NavIconBox>网络</NavRow>
          </NavPane>
          <ContentPane>
            <GroupHead $h={35} $top={8} $bottom={0}><Chevron />文件夹 (6)<HeadLine /></GroupHead>
            <ItemRow $h={56}><VideoFolder /><ItemName>视频</ItemName></ItemRow>
            <ItemRow $h={56}><DocFolder /><ItemName>文档</ItemName></ItemRow>
            <ItemRow $h={56}><MusicFolder /><ItemName>音乐</ItemName></ItemRow>
            <GroupHead $h={31} $top={0} $bottom={4}><Chevron />设备和驱动器 (2)<HeadLine /></GroupHead>
            <ItemRow $h={59} $selected>
              <Drive size={48} />
              <DriveInfo>
                <ItemName>本地磁盘 (C:)</ItemName>
                <Usage />
                <FreeText>2.93 GB 可用，共 12.9 GB</FreeText>
              </DriveInfo>
            </ItemRow>
            <ItemRow $h={56}><DvdDrive size={48} /><ItemName>DVD 驱动器 (E:)</ItemName></ItemRow>
          </ContentPane>
        </ExBody>
        <StatusBar>
          <StatusCell $w={57}>9 个项目</StatusCell>
          <StatusCell $w={86}>选中 1 个项目</StatusCell>
          <StatusIcons><DetailsGlyph /><LargeGlyph /></StatusIcons>
        </StatusBar>
      </ExplorerWin>

      <DialogWin $x={447} $y={114} $w={421} $h={603}>
        <DlgTitle>
          <Drive size={16} />本地磁盘 (C:) 属性
          <DlgClose><Cross size={12} color="#111" /></DlgClose>
        </DlgTitle>
        <DlgTabs>
          <DlgTab $w={51} $pad={7} $active>常规</DlgTab>
          <DlgTab $w={46} $pad={5}>工具</DlgTab>
          <DlgTab $w={48} $pad={7}>硬件</DlgTab>
          <DlgTab $w={48} $pad={7}>安全</DlgTab>
          <DlgTab $w={72} $pad={7}>以前的版本</DlgTab>
          <DlgTab $w={47} $pad={7}>配额</DlgTab>
        </DlgTabs>
        <Panel />
        <DlgFooter>
          <DlgButton $kind="default">确定</DlgButton>
          <DlgButton>取消</DlgButton>
          <DlgButton $kind="disabled">应用(A)</DlgButton>
        </DlgFooter>
      </DialogWin>

      <Taskbar>
        <TaskSlot $w={48}><StartLogo /></TaskSlot>
        <TaskSlot $w={48}><Cortana /></TaskSlot>
        <TaskSlot $w={48}><TaskView /></TaskSlot>
        <TaskSlot $w={56}><IeLogo size={24} /></TaskSlot>
        <TaskItem $w={152} $gap={9} $pad={7}><PerspectiveMonitor size={24} />此电脑</TaskItem>
        <TaskItem $w={152} $gap={5} $pad={7}><PerspectiveMonitor size={24} check />控制面板\所有控制...</TaskItem>
        <TaskItem $w={160} $gap={0} $pad={11} $active><Drive size={24} />本地磁盘 (C:) 属性</TaskItem>
        <Tray>
          <TrayIcon $w={22}><Caretup /></TrayIcon>
          <TrayIcon $w={26}><NetTray /></TrayIcon>
          <TrayIcon $w={24}><SoundTray /></TrayIcon>
          <TrayIcon $w={22}>中</TrayIcon>
          <Clock><ClockTime>23:19</ClockTime><ClockDate>2019/1/14</ClockDate></Clock>
        </Tray>
      </Taskbar>

      <Watermark>
        <WmTop>LaneUyee.com</WmTop>
        <WmBottom>系统 软件 免费分享</WmBottom>
      </Watermark>
      <CursorLayer><Cursor /></CursorLayer>
    </Screen>
  );
}
